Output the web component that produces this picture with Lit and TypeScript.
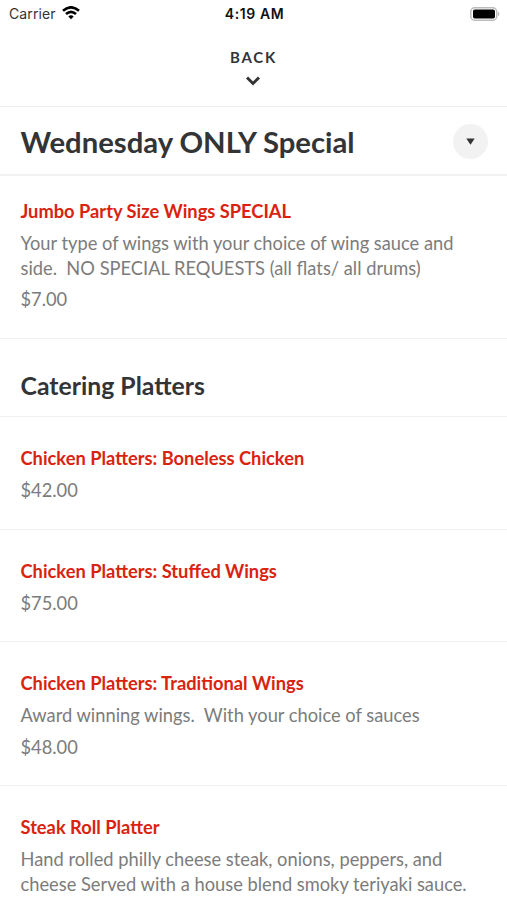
import { LitElement, html, css, nothing } from "lit";
import { customElement } from "lit/decorators.js";

interface Item { name: string; lines: string[]; price?: string; }

const special: Item[] = [
  { name: "Jumbo Party Size Wings SPECIAL", lines: ["Your type of wings with your choice of wing sauce and", "side.\u00a0 NO SPECIAL REQUESTS (all flats/ all drums)"], price: "$7.00" },
];
const platters: Item[] = [
  { name: "Chicken Platters: Boneless Chicken", lines: [], price: "$42.00" },
  { name: "Chicken Platters: Stuffed Wings", lines: [], price: "$75.00" },
  { name: "Chicken Platters: Traditional Wings", lines: ["Award winning wings.\u00a0 With your choice of sauces"], price: "$48.00" },
  { name: "Steak Roll Platter", lines: ["Hand rolled philly cheese steak, onions, peppers, and", "cheese Served with a house blend smoky teriyaki sauce."] },
];

@customElement("app-root")
export class AppRoot extends LitElement {
  static styles = css`
    :host { display: block; height: 900px; overflow: hidden; background: #fff; color: #333436; font-family: Lato, sans-serif; }
    .status { display: grid; grid-template-columns: 1fr auto 1fr; align-items: center; height: 28px; padding: 0 7px 0 9px; box-sizing: border-box; font: 14px/28px Inter, sans-serif; color: #111; }
    .carrier { display: flex; align-items: center; gap: 6px; color: #333; letter-spacing: .1px; }
    .carrier svg { margin-top: -2px; }
    .time { font-weight: 600; letter-spacing: .6px; }
    .battery { justify-self: end; margin-top: -1px; }
    svg { display: block; }
    .back { height: 79px; box-sizing: border-box; padding-top: 19px; border-bottom: 1px solid #ececec; display: flex; flex-direction: column; align-items: center; }
    .back span { font-weight: 700; font-size: 15px; line-height: 20px; letter-spacing: 1.8px; }
    .back svg { margin: 9px 2px 0 0; }
    .head { height: 69px; box-sizing: border-box; border-bottom: 2px solid #f2f2f2; padding: 2px 19px 0 20.5px; display: flex; align-items: center; justify-content: space-between; }
    h1 { margin: 0; font-size: 29.25px; line-height: 36px; font-weight: 700; white-space: nowrap; }
    .drop { width: 35px; height: 35px; border-radius: 50%; background: #f2f2f2; display: grid; place-items: center; }
    h2 { margin: 0; height: 78.5px; box-sizing: border-box; padding: 31.5px 20.5px 0; font-size: 24.8px; line-height: 32px; font-weight: 700; border-bottom: 1px solid #f0f0f0; }
    .item { padding: 29px 20.5px 26px; border-bottom: 1px solid #f0f0f0; white-space: nowrap; }
    .first .item { padding-top: 23px; }
    .name { font-size: 18.3px; line-height: 24px; font-weight: 700; color: #d9230f; }
    .desc, .price { font-size: 18.3px; line-height: 24.5px; color: #7c7c7c; margin-top: 8px; }
    .desc + .price { margin-top: 7px; }
  `;
  private item(i: Item) {
    return html`<div class="item"><div class="name">${i.name}</div>
      ${i.lines.length ? html`<div class="desc">${i.lines.map((l) => html`<div>${l}</div>`)}</div>` : nothing}
      ${i.price ? html`<div class="price">${i.price}</div>` : nothing}</div>`;
  }
  render() {
    return html`
      <div class="status">
        <div class="carrier">Carrier
          <svg width="18" height="14" viewBox="0 0 18 14" fill="none" stroke="#000" stroke-width="2.6"><path d="M1 4.8Q9-2.2 17 4.8M4 8Q9 3.7 14 8"/><path d="M9 13.2L6.3 10.5Q9 8.2 11.7 10.5Z" fill="#000" stroke="none"/></svg>
        </div>
        <div class="time">4:19 AM</div>
        <svg class="battery" width="30" height="14" viewBox="0 0 30 14"><rect x=".75" y=".75" width="26" height="12.5" rx="4" fill="none" stroke="#bbb" stroke-width="1.5"/><rect x="3" y="2.5" width="22" height="9" rx="1.8"/><path d="M28 4.5q3 2.5 0 5z" fill="#bbb"/></svg>
      </div>
      <div class="back"><span>BACK</span><svg width="14" height="10" viewBox="0 0 14 10" fill="none" stroke="#333436" stroke-width="3"><path d="M1 1.5L7 7.5L13 1.5"/></svg></div>
      <div class="head"><h1>Wednesday ONLY Special</h1><div class="drop"><svg width="9" height="7" viewBox="0 0 9 7"><path d="M.3 .5H8.7L4.5 6.7Z" fill="#333436"/></svg></div></div>
      <div class="first">${special.map((i) => this.item(i))}</div>
      <h2>Catering Platters</h2>
      ${platters.map((i) => this.item(i))}`;
  }
}
